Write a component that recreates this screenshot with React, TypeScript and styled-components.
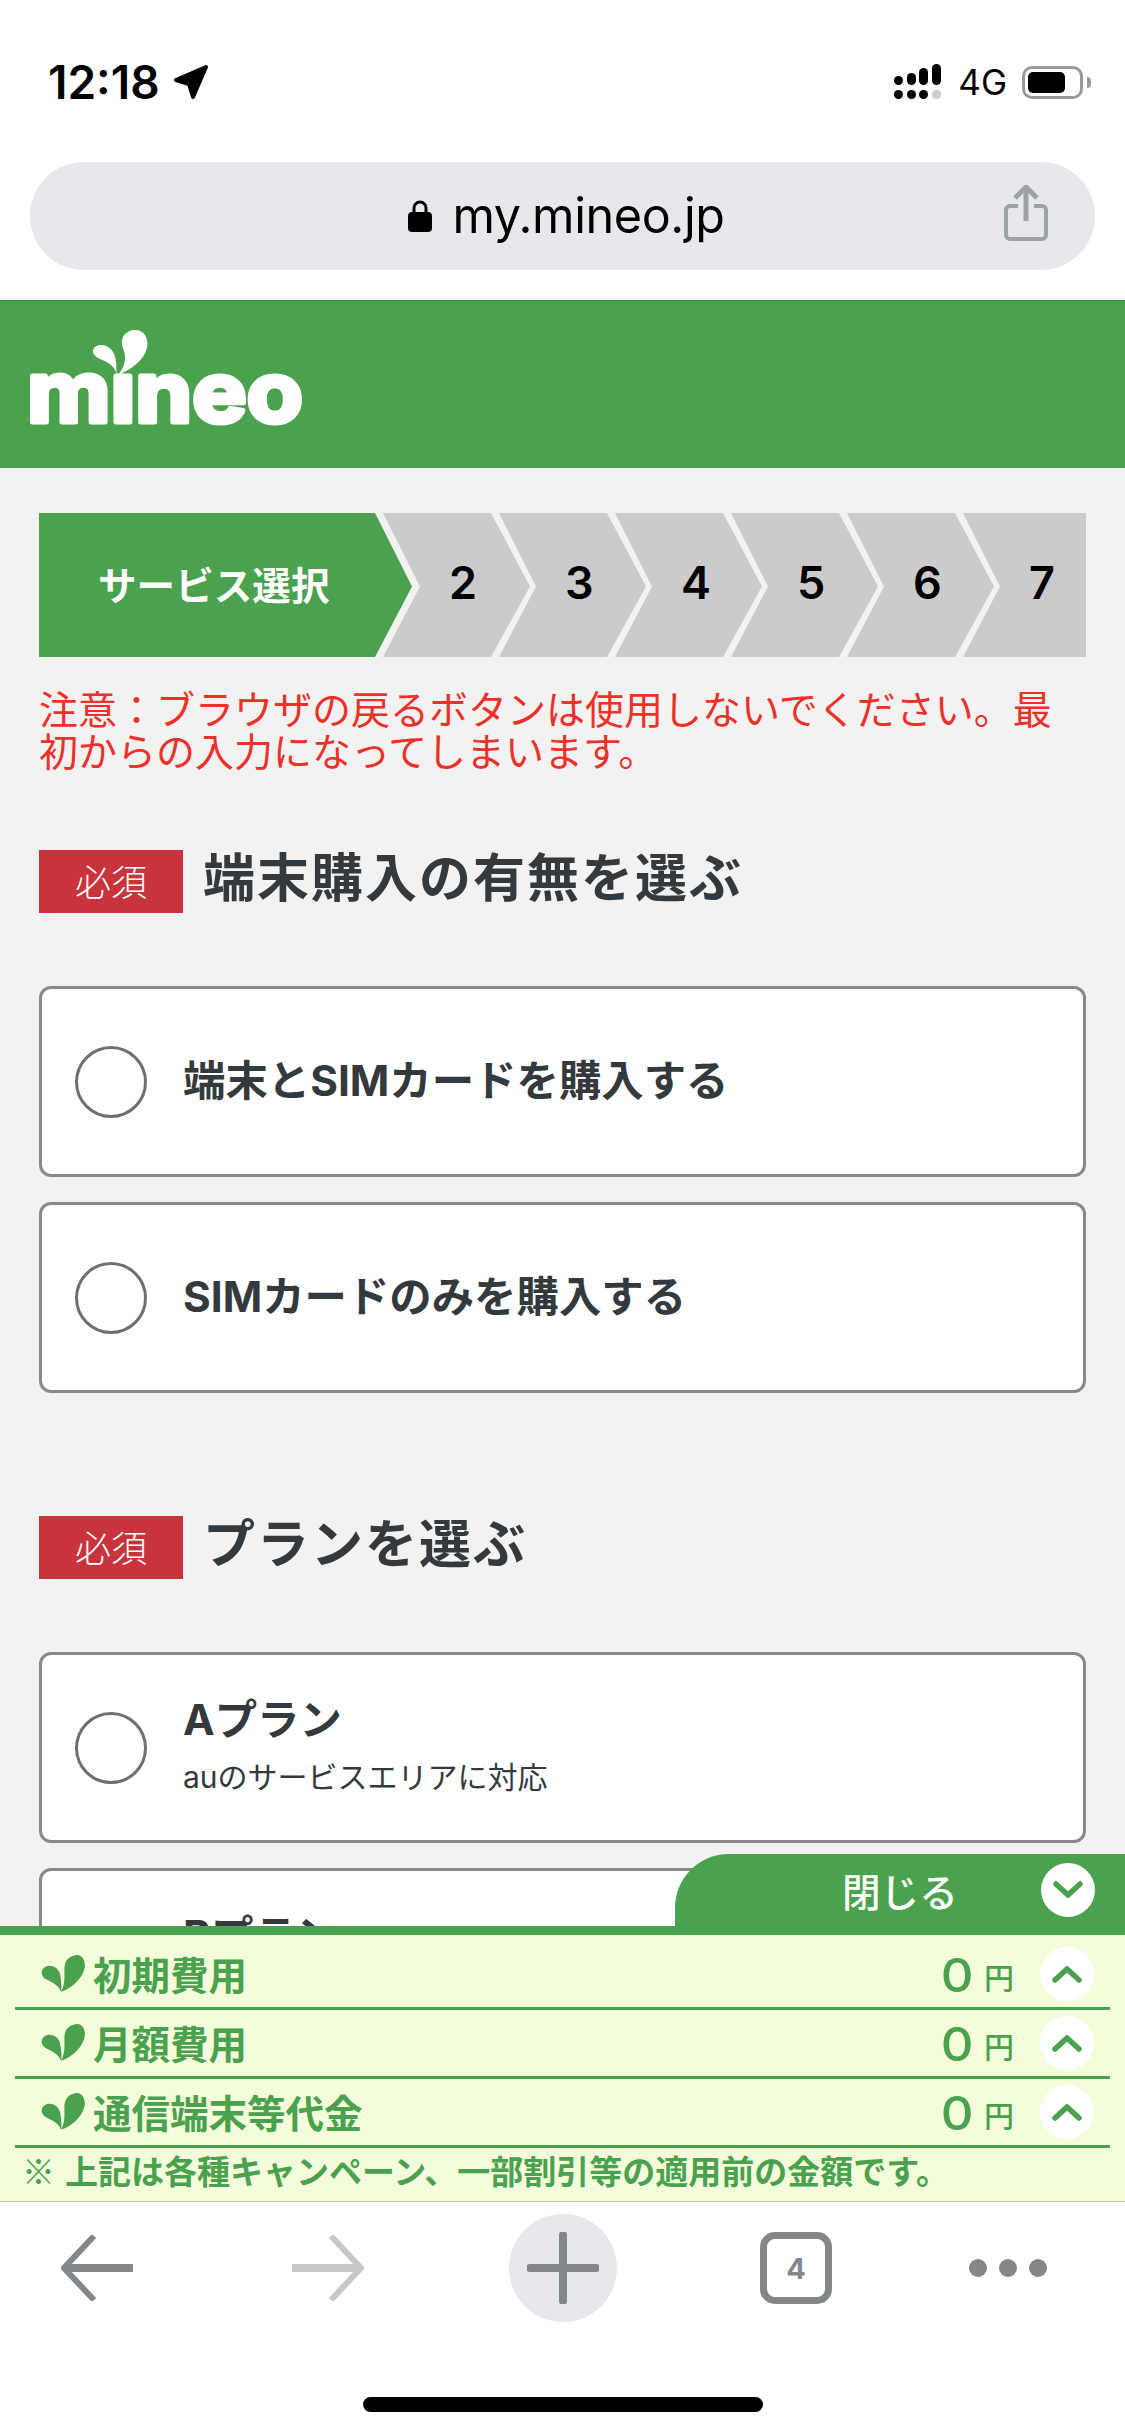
import styled, { createGlobalStyle } from "styled-components";

const GREEN = "#4aa14e";
const TOOL_GREY = "#82878b";

const GlobalStyle = createGlobalStyle`
  html, body {
    margin: 0;
    padding: 0;
    background: #ffffff;
  }
  * {
    box-sizing: border-box;
  }
`;

const Phone = styled.div`
  width: 1125px;
  height: 2436px;
  display: flex;
  flex-direction: column;
  overflow: hidden;
  background: #ffffff;
  font-family: Inter, "Noto Sans CJK JP", sans-serif;
  color: #000000;
`;

const StatusBar = styled.div`
  height: 162px;
  padding: 60px 34px 0 48px;
  display: flex;
  justify-content: space-between;
  align-items: flex-start;
`;

const Clock = styled.div`
  display: flex;
  align-items: center;
  gap: 13px;
  font-size: 46px;
  line-height: 44px;
  font-weight: 600;
`;

const StatusIcons = styled.div`
  display: flex;
  align-items: center;
  height: 44px;
  gap: 17px;
`;

const Network = styled.span`
  font-size: 35px;
  font-weight: 400;
  line-height: 44px;
  margin-right: -2px;
`;

const Battery = styled.div`
  position: relative;
  width: 61px;
  height: 33px;
  margin-right: 8px;
  padding: 3px;
  border: 3px solid #999999;
  border-radius: 10px;

  &::before {
    content: "";
    display: block;
    width: 37px;
    height: 21px;
    background: #000000;
    border-radius: 5px;
  }

  &::after {
    content: "";
    position: absolute;
    right: -11px;
    top: 8px;
    width: 4px;
    height: 11px;
    background: #999999;
    border-radius: 0 4px 4px 0;
  }
`;

const UrlArea = styled.div`
  height: 138px;
  padding: 0 30px;
`;

const UrlPill = styled.div`
  position: relative;
  height: 108px;
  border-radius: 54px;
  background: #e7e8ec;
  display: flex;
  align-items: center;
  justify-content: center;
  gap: 20px;
  padding-left: 8px;
`;

const UrlText = styled.span`
  font-size: 48.5px;
  line-height: 108px;
  letter-spacing: -0.4px;
`;

const ShareButton = styled.span`
  position: absolute;
  right: 47px;
  top: 23px;
  display: flex;
`;

const Viewport = styled.div`
  position: relative;
  height: 1902px;
  overflow: hidden;
  background: #f2f2f2;
`;

const Header = styled.header`
  height: 168px;
  background: ${GREEN};
  border-top: 1px solid #3f8a44;
  padding: 29px 0 0 28px;
`;

const Content = styled.main`
  padding: 45px 39px 0;
`;

const Steps = styled.ol`
  list-style: none;
  margin: 0;
  padding: 0;
  height: 144px;
  display: flex;
`;

const Step = styled.li<{ $active?: boolean; $last?: boolean }>`
  flex: ${(props) => (props.$last ? "1" : "none")};
  width: ${(props) => (props.$active ? "373px" : "147px")};
  margin-left: ${(props) => (props.$active ? "0" : "-31px")};
  margin-right: ${(props) => (props.$active ? "2px" : "0")};
  padding: 0 0 5px ${(props) => (props.$active ? "59px" : "66px")};
  display: flex;
  align-items: center;
  background: ${(props) => (props.$active ? GREEN : "#cbcbcb")};
  color: ${(props) => (props.$active ? "#ffffff" : "#000000")};
  font-size: ${(props) => (props.$active ? "38.6px" : "45px")};
  font-weight: ${(props) => (props.$active ? 700 : 600)};
  clip-path: ${(props) =>
    props.$active
      ? "polygon(0 0, calc(100% - 37px) 0, 100% 51%, calc(100% - 37px) 100%, 0 100%)"
      : props.$last
        ? "polygon(0 0, 100% 0, 100% 100%, 0 100%, 37px 51%)"
        : "polygon(0 0, calc(100% - 39px) 0, 100% 51%, calc(100% - 39px) 100%, 0 100%, 37px 51%)"};
`;

const Warning = styled.p`
  margin: 32px 0 0;
  font-size: 39px;
  line-height: 42px;
  color: #ee3128;
`;

const SectionHead = styled.div<{ $top: number }>`
  margin-top: ${(props) => props.$top}px;
  display: flex;
  align-items: center;
  gap: 20px;
`;

const Required = styled.span`
  width: 144px;
  height: 63px;
  padding-bottom: 4px;
  background: #c9333b;
  color: #ffffff;
  font-size: 36px;
  font-weight: 300;
  display: flex;
  align-items: center;
  justify-content: center;
`;

const SectionTitle = styled.h2`
  margin: 0;
  padding-bottom: 5px;
  font-size: 52px;
  line-height: 58px;
  font-weight: 700;
  letter-spacing: 2px;
  color: #33393d;
`;

const Options = styled.div`
  margin-top: 73px;
  display: flex;
  flex-direction: column;
  gap: 25px;
`;

const Option = styled.div`
  height: 191px;
  background: #ffffff;
  border: 3px solid #888888;
  border-radius: 12px;
  padding-left: 33px;
  display: flex;
  align-items: center;
  gap: 36px;
`;

const Radio = styled.span`
  flex: none;
  width: 72px;
  height: 72px;
  border: 3px solid #6f6f6f;
  border-radius: 50%;
  background: #ffffff;
`;

const OptionBody = styled.div<{ $twoLines?: boolean }>`
  display: flex;
  flex-direction: column;
  gap: 14px;
  min-height: ${(props) => (props.$twoLines ? "106px" : "0")};
  padding-bottom: ${(props) => (props.$twoLines ? "6px" : "2px")};
  color: #33393d;
`;

const OptionTitle = styled.span`
  font-size: 42.4px;
  line-height: 50px;
  font-weight: 700;
`;

const OptionNote = styled.span`
  font-size: 30px;
  line-height: 36px;
  font-weight: 400;
`;

const Summary = styled.div`
  position: absolute;
  left: 0;
  right: 0;
  bottom: 0;
  display: flex;
  flex-direction: column;
`;

const CloseTab = styled.div`
  align-self: flex-end;
  width: 450px;
  height: 72px;
  padding: 0 30px 0 167px;
  background: ${GREEN};
  border-radius: 54px 0 0 0;
  color: #ffffff;
  font-size: 38.6px;
  font-weight: 500;
  display: flex;
  align-items: center;
  justify-content: space-between;
`;

const RoundButton = styled.span`
  flex: none;
  width: 54px;
  height: 54px;
  border-radius: 50%;
  background: #ffffff;
  display: flex;
  align-items: center;
  justify-content: center;
`;

const Panel = styled.div`
  border-top: 9px solid ${GREEN};
  border-bottom: 1px solid #c8cbb4;
  background: #f3fddc;
  height: 276px;
  padding-top: 6px;
  color: ${GREEN};
`;

const CostRow = styled.div`
  height: 69px;
  margin: 0 15px;
  padding: 0 16px 0 26px;
  border-bottom: 3px solid ${GREEN};
  display: flex;
  align-items: center;
`;

const CostLabel = styled.span`
  flex: 1;
  margin-left: 8px;
  padding-top: 5px;
  font-size: 38.5px;
  line-height: 61px;
  font-weight: 700;
`;

const CostValue = styled.span`
  padding-top: 2px;
  margin-right: 2px;
  font-size: 47px;
  line-height: 64px;
  font-weight: 500;
  transform: scaleX(1.08);
`;

const CostUnit = styled.span`
  margin: 8px 26px 0 10px;
  font-size: 30px;
  line-height: 40px;
  font-weight: 500;
`;

const Note = styled.p`
  margin: 0;
  padding: 0 0 0 22px;
  font-size: 33px;
  line-height: 44px;
  font-weight: 700;
  white-space: nowrap;
`;

const NoteMark = styled.span`
  display: inline-block;
  width: 43px;
  font-family: "Noto Sans CJK JP", sans-serif;
  font-weight: 400;
`;

const Toolbar = styled.nav`
  height: 234px;
  background: #ffffff;
  padding: 30px 0 0;
  position: relative;
  display: flex;
  align-items: flex-start;
`;

const ToolSlot = styled.span<{ $left: number }>`
  margin-left: ${(props) => props.$left}px;
  height: 72px;
  display: flex;
  align-items: center;
`;

const PlusCircle = styled.span`
  width: 108px;
  height: 108px;
  border-radius: 50%;
  background: #e7e8ec;
  display: flex;
  align-items: center;
  justify-content: center;
`;

const TabCount = styled.span`
  width: 72px;
  height: 72px;
  border: 7px solid ${TOOL_GREY};
  border-radius: 15px;
  color: ${TOOL_GREY};
  font-size: 29px;
  font-weight: 700;
  display: flex;
  align-items: center;
  justify-content: center;
`;

const HomeBar = styled.div`
  position: absolute;
  left: 363px;
  bottom: 24px;
  width: 400px;
  height: 15px;
  border-radius: 8px;
  background: #000000;
`;

function Signal() {
  return (
    <svg width="47" height="36" viewBox="0 0 47 36">
      <rect x="0" y="26" width="9" height="9" rx="4.5" />
      <rect x="13" y="26" width="9" height="9" rx="4.5" />
      <rect x="25" y="26" width="9" height="9" rx="4.5" />
      <rect x="38" y="26" width="9" height="9" rx="4" fill="#cfcfcf" />
      <rect x="0" y="12" width="9" height="9" rx="4.5" />
      <rect x="13" y="9" width="9" height="12" rx="4.5" />
      <rect x="25" y="4" width="9" height="17" rx="4.5" />
      <rect x="38" y="0" width="9" height="21" rx="4.5" />
    </svg>
  );
}

function Leaf({ size, color }: { size: number; color: string }) {
  return (
    <svg width={size} height={size * 0.86} viewBox="0 0 44 38">
      <path
        fill={color}
        d="M20 37C26 26 22 16 24 9C26 2 33 0 37 0C42 1 44 6 44 11C43 22 32 33 20 37Z"
      />
      <path
        fill={color}
        d="M20 37C17 28 8 27 3 23C-1 19 0 13 6 11C12 10 17 13 19 19C20 25 21 31 20 37Z"
      />
    </svg>
  );
}

function Logo() {
  return (
    <svg width="282" height="120" viewBox="0 0 282 120">
      <text
        x="-1"
        y="92"
        fill="#ffffff"
        stroke="#ffffff"
        strokeWidth="5"
        strokeLinejoin="round"
        fontFamily="Inter, sans-serif"
        fontSize="84"
        fontWeight="700"
        textLength="276"
        lengthAdjust="spacingAndGlyphs"
      >
        mıneo
      </text>
      <path
        fill="#ffffff"
        d="M90 45C97 36 99 28 95 18C91 8 98 0 107 0C116 0 121 8 119 18C116 30 104 39 90 45Z"
      />
      <path
        fill="#ffffff"
        d="M89 45C87 36 80 32 72 29C65 26 63 20 67 17C73 13 82 15 86 24C89 31 88 38 89 45Z"
      />
    </svg>
  );
}

function Chevron({ up }: { up?: boolean }) {
  return (
    <svg width="32" height="20" viewBox="0 0 32 20">
      <path
        d={up ? "M4 16L16 5L28 16" : "M4 4L16 15L28 4"}
        fill="none"
        stroke={GREEN}
        strokeWidth="5.5"
        strokeLinecap="round"
        strokeLinejoin="round"
      />
    </svg>
  );
}

function ToolArrow({ color, flip }: { color: string; flip?: boolean }) {
  return (
    <svg
      width="72"
      height="66"
      viewBox="0 0 72 66"
      style={flip ? { transform: "scaleX(-1)" } : undefined}
    >
      <path d="M3 33H72" stroke={color} strokeWidth="8" fill="none" />
      <path d="M33 1L3 33L33 65" stroke={color} strokeWidth="6" fill="none" />
    </svg>
  );
}

const costs = ["初期費用", "月額費用", "通信端末等代金"];
const stepNumbers = [2, 3, 4, 5, 6, 7];

export default function App() {
  return (
    <Phone>
      <GlobalStyle />
      <StatusBar>
        <Clock>
          12:18
          <svg width="36" height="36" viewBox="0 0 36 36">
            <path
              d="M33 3L3 16L16 20L20 33Z"
              stroke="#000"
              strokeWidth="4"
              strokeLinejoin="round"
            />
          </svg>
        </Clock>
        <StatusIcons>
          <Signal />
          <Network>4G</Network>
          <Battery />
        </StatusIcons>
      </StatusBar>

      <UrlArea>
        <UrlPill>
          <svg width="24" height="32" viewBox="0 0 24 32">
            <path d="M6 13V8a6 6 0 0 1 12 0v5" fill="none" stroke="#000" strokeWidth="3" />
            <rect x="0" y="12" width="24" height="20" rx="4" />
          </svg>
          <UrlText>my.mineo.jp</UrlText>
          <ShareButton>
            <svg width="44" height="56" viewBox="0 0 44 56">
              <path
                d="M14 21H6a4 4 0 0 0-4 4v25a4 4 0 0 0 4 4h32a4 4 0 0 0 4-4V25a4 4 0 0 0-4-4h-8"
                fill="none"
                stroke="#9da2a8"
                strokeWidth="4"
              />
              <path d="M22 36V3" stroke="#9da2a8" strokeWidth="5" />
              <path d="M11 13L22 2L33 13" fill="none" stroke="#9da2a8" strokeWidth="5" />
            </svg>
          </ShareButton>
        </UrlPill>
      </UrlArea>

      <Viewport>
        <Header>
          <Logo />
        </Header>
        <Content>
          <Steps>
            <Step $active>サービス選択</Step>
            {stepNumbers.map((n) => (
              <Step key={n} $last={n === 7}>
                {n}
              </Step>
            ))}
          </Steps>

          <Warning>
            注意：ブラウザの戻るボタンは使用しないでください。最初からの入力になってしまいます。
          </Warning>

          <SectionHead $top={77}>
            <Required>必須</Required>
            <SectionTitle>端末購入の有無を選ぶ</SectionTitle>
          </SectionHead>
          <Options>
            <Option>
              <Radio />
              <OptionBody>
                <OptionTitle>端末とSIMカードを購入する</OptionTitle>
              </OptionBody>
            </Option>
            <Option>
              <Radio />
              <OptionBody>
                <OptionTitle>SIMカードのみを購入する</OptionTitle>
              </OptionBody>
            </Option>
          </Options>

          <SectionHead $top={123}>
            <Required>必須</Required>
            <SectionTitle>プランを選ぶ</SectionTitle>
          </SectionHead>
          <Options>
            <Option>
              <Radio />
              <OptionBody $twoLines>
                <OptionTitle>Aプラン</OptionTitle>
                <OptionNote>auのサービスエリアに対応</OptionNote>
              </OptionBody>
            </Option>
            <Option>
              <Radio />
              <OptionBody $twoLines>
                <OptionTitle>Bプラン</OptionTitle>
              </OptionBody>
            </Option>
          </Options>
        </Content>

        <Summary>
          <CloseTab>
            閉じる
            <RoundButton>
              <Chevron />
            </RoundButton>
          </CloseTab>
          <Panel>
            {costs.map((label) => (
              <CostRow key={label}>
                <Leaf size={44} color={GREEN} />
                <CostLabel>{label}</CostLabel>
                <CostValue>0</CostValue>
                <CostUnit>円</CostUnit>
                <RoundButton>
                  <Chevron up />
                </RoundButton>
              </CostRow>
            ))}
            <Note>
              <NoteMark>※</NoteMark>上記は各種キャンペーン、一部割引等の適用前の金額です。
            </Note>
          </Panel>
        </Summary>
      </Viewport>

      <Toolbar>
        <ToolSlot $left={61}>
          <ToolArrow color={TOOL_GREY} />
        </ToolSlot>
        <ToolSlot $left={159}>
          <ToolArrow color="#c8c8c8" flip />
        </ToolSlot>
        <ToolSlot $left={145}>
          <PlusCircle>
            <svg width="72" height="72" viewBox="0 0 72 72">
              <path d="M36 3V69M3 36H69" stroke={TOOL_GREY} strokeWidth="8" strokeLinecap="round" />
            </svg>
          </PlusCircle>
        </ToolSlot>
        <ToolSlot $left={143}>
          <TabCount>4</TabCount>
        </ToolSlot>
        <ToolSlot $left={137}>
          <svg width="78" height="20" viewBox="0 0 78 20">
            <circle cx="9" cy="10" r="9" fill={TOOL_GREY} />
            <circle cx="39" cy="10" r="9" fill={TOOL_GREY} />
            <circle cx="69" cy="10" r="9" fill={TOOL_GREY} />
          </svg>
        </ToolSlot>
        <HomeBar />
      </Toolbar>
    </Phone>
  );
}
